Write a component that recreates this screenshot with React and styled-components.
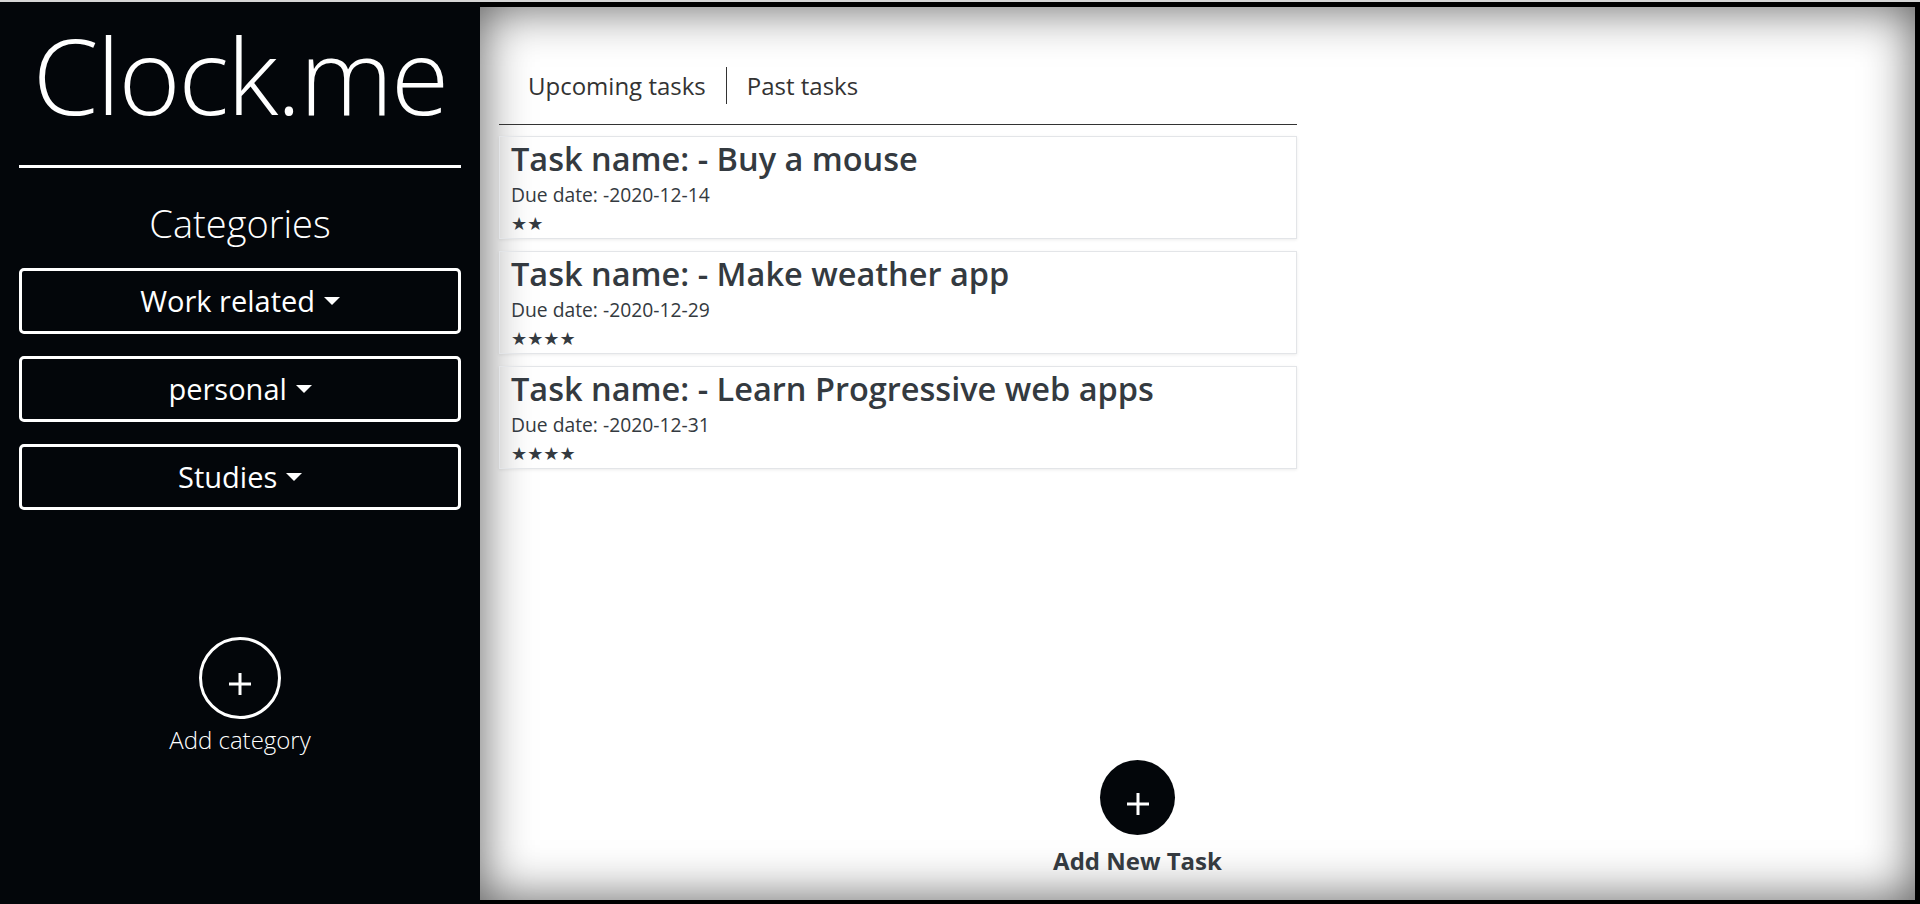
import React from "react";
import styled, { createGlobalStyle } from "styled-components";

const GlobalStyle = createGlobalStyle`
  html, body {
    margin: 0;
    padding: 0;
  }
  body {
    background: #000;
    font-family: "Open Sans", "Noto Sans", sans-serif;
  }
  * {
    box-sizing: border-box;
  }
`;

const Page = styled.div`
  display: flex;
  height: 904px;
  border-top: 2px solid #d6d6d6;
  background: #000;
`;

const Sidebar = styled.aside`
  width: 480px;
  flex-shrink: 0;
  background: #03060a;
  color: #fff;
  display: flex;
  flex-direction: column;
  padding: 0 19px;
`;

const Logo = styled.h1`
  margin: 19px 0 0;
  font-size: 106px;
  font-weight: 300;
  line-height: 1;
  letter-spacing: -2px;
  text-align: center;
`;

const Divider = styled.hr`
  margin: 38px 0 0;
  border: none;
  height: 3px;
  background: #fff;
`;

const SideHeading = styled.h2`
  margin: 33px 0 0;
  font-size: 38px;
  font-weight: 300;
  line-height: 1.2;
  text-align: center;
`;

const CategoryList = styled.div`
  display: flex;
  flex-direction: column;
  gap: 22px;
  margin-top: 21px;
`;

const CategoryButton = styled.button`
  height: 66px;
  width: 100%;
  background: transparent;
  border: 3px solid #fff;
  border-radius: 5px;
  color: #fff;
  font-family: inherit;
  font-size: 29px;
  font-weight: 400;
  cursor: pointer;

  &::after {
    content: "";
    display: inline-block;
    margin-left: 0.3em;
    vertical-align: 0.255em;
    border-top: 0.3em solid #fff;
    border-right: 0.3em solid transparent;
    border-left: 0.3em solid transparent;
  }
`;

const AddBlock = styled.div`
  display: flex;
  flex-direction: column;
  align-items: center;
  margin-top: ${({ $top }) => $top};
  padding-right: ${({ $shift }) => $shift || "0"};
`;

const Circle = styled.button`
  width: ${({ $size }) => $size}px;
  height: ${({ $size }) => $size}px;
  border-radius: 50%;
  border: ${({ $outline }) => ($outline ? "3px solid #fff" : "none")};
  background: #03060a;
  display: flex;
  align-items: center;
  justify-content: center;
  padding: 12px 0 0;
  cursor: pointer;
`;

const AddLabel = styled.span`
  margin-top: ${({ $gap }) => $gap};
  font-size: ${({ $size }) => $size};
  font-weight: ${({ $weight }) => $weight};
  line-height: 1.2;
  color: ${({ $color }) => $color};
`;

const Main = styled.main`
  flex: 1;
  margin: 5px 5px 4px 0;
  background: #fff;
  box-shadow: inset 0 0 50px rgba(0, 0, 0, 0.65);
  display: flex;
  flex-direction: column;
  padding: 60px 19px 24px;
`;

const Content = styled.div`
  width: 798px;
`;

const Tabs = styled.nav`
  display: flex;
  padding-left: 9px;
`;

const Tab = styled.a`
  padding: 0 20px;
  font-size: 24px;
  line-height: 37px;
  color: #333;
  border-right: ${({ $divider }) => ($divider ? "1px solid #333" : "none")};
  cursor: pointer;
`;

const Rule = styled.div`
  margin-top: 20px;
  height: 1px;
  background: #333;
`;

const TaskList = styled.div`
  display: flex;
  flex-direction: column;
  gap: 12px;
  margin-top: 11px;
`;

const TaskCard = styled.div`
  border: 1px solid #e3e5e8;
  box-shadow: 0 1px 3px rgba(0, 0, 0, 0.08);
  padding: 3px 11px 3px;
`;

const TaskTitle = styled.h3`
  margin: 0;
  font-size: 32.5px;
  font-weight: 600;
  line-height: 37px;
  color: #343a40;
`;

const DueDate = styled.p`
  margin: 6px 0 0;
  font-size: 19.3px;
  line-height: 24px;
  color: #343a40;
`;

const Stars = styled.div`
  margin-top: 6px;
  font-family: "DejaVu Sans", sans-serif;
  font-size: 18px;
  line-height: 22px;
  color: #343a40;
`;

const Plus = ({ size, color }) => (
  <svg width={size} height={size} viewBox="0 0 24 24">
    <path d="M12 1v22M1 12h22" stroke={color} strokeWidth="3" fill="none" />
  </svg>
);

const categories = ["Work related", "personal", "Studies"];

const tasks = [
  { name: "Buy a mouse", due: "2020-12-14", stars: 2 },
  { name: "Make weather app", due: "2020-12-29", stars: 4 },
  { name: "Learn Progressive web apps", due: "2020-12-31", stars: 4 },
];

export default function App() {
  return (
    <>
      <GlobalStyle />
      <Page>
        <Sidebar>
          <Logo>Clock.me</Logo>
          <Divider />
          <SideHeading>Categories</SideHeading>
          <CategoryList>
            {categories.map((c) => (
              <CategoryButton key={c}>{c}</CategoryButton>
            ))}
          </CategoryList>
          <AddBlock $top="127px">
            <Circle $size={82} $outline>
              <Plus size={24} color="#fff" />
            </Circle>
            <AddLabel $gap="7px" $size="24px" $weight={300} $color="#fff">
              Add category
            </AddLabel>
          </AddBlock>
        </Sidebar>
        <Main>
          <Content>
            <Tabs>
              <Tab $divider>Upcoming tasks</Tab>
              <Tab>Past tasks</Tab>
            </Tabs>
            <Rule />
            <TaskList>
              {tasks.map((t) => (
                <TaskCard key={t.name}>
                  <TaskTitle>Task name: - {t.name}</TaskTitle>
                  <DueDate>Due date: -{t.due}</DueDate>
                  <Stars>{"★".repeat(t.stars)}</Stars>
                </TaskCard>
              ))}
            </TaskList>
          </Content>
          <AddBlock $top="auto" $shift="120px">
            <Circle $size={75}>
              <Plus size={24} color="#fff" />
            </Circle>
            <AddLabel $gap="12px" $size="24px" $weight={700} $color="#343a40">
              Add New Task
            </AddLabel>
          </AddBlock>
        </Main>
      </Page>
    </>
  );
}
